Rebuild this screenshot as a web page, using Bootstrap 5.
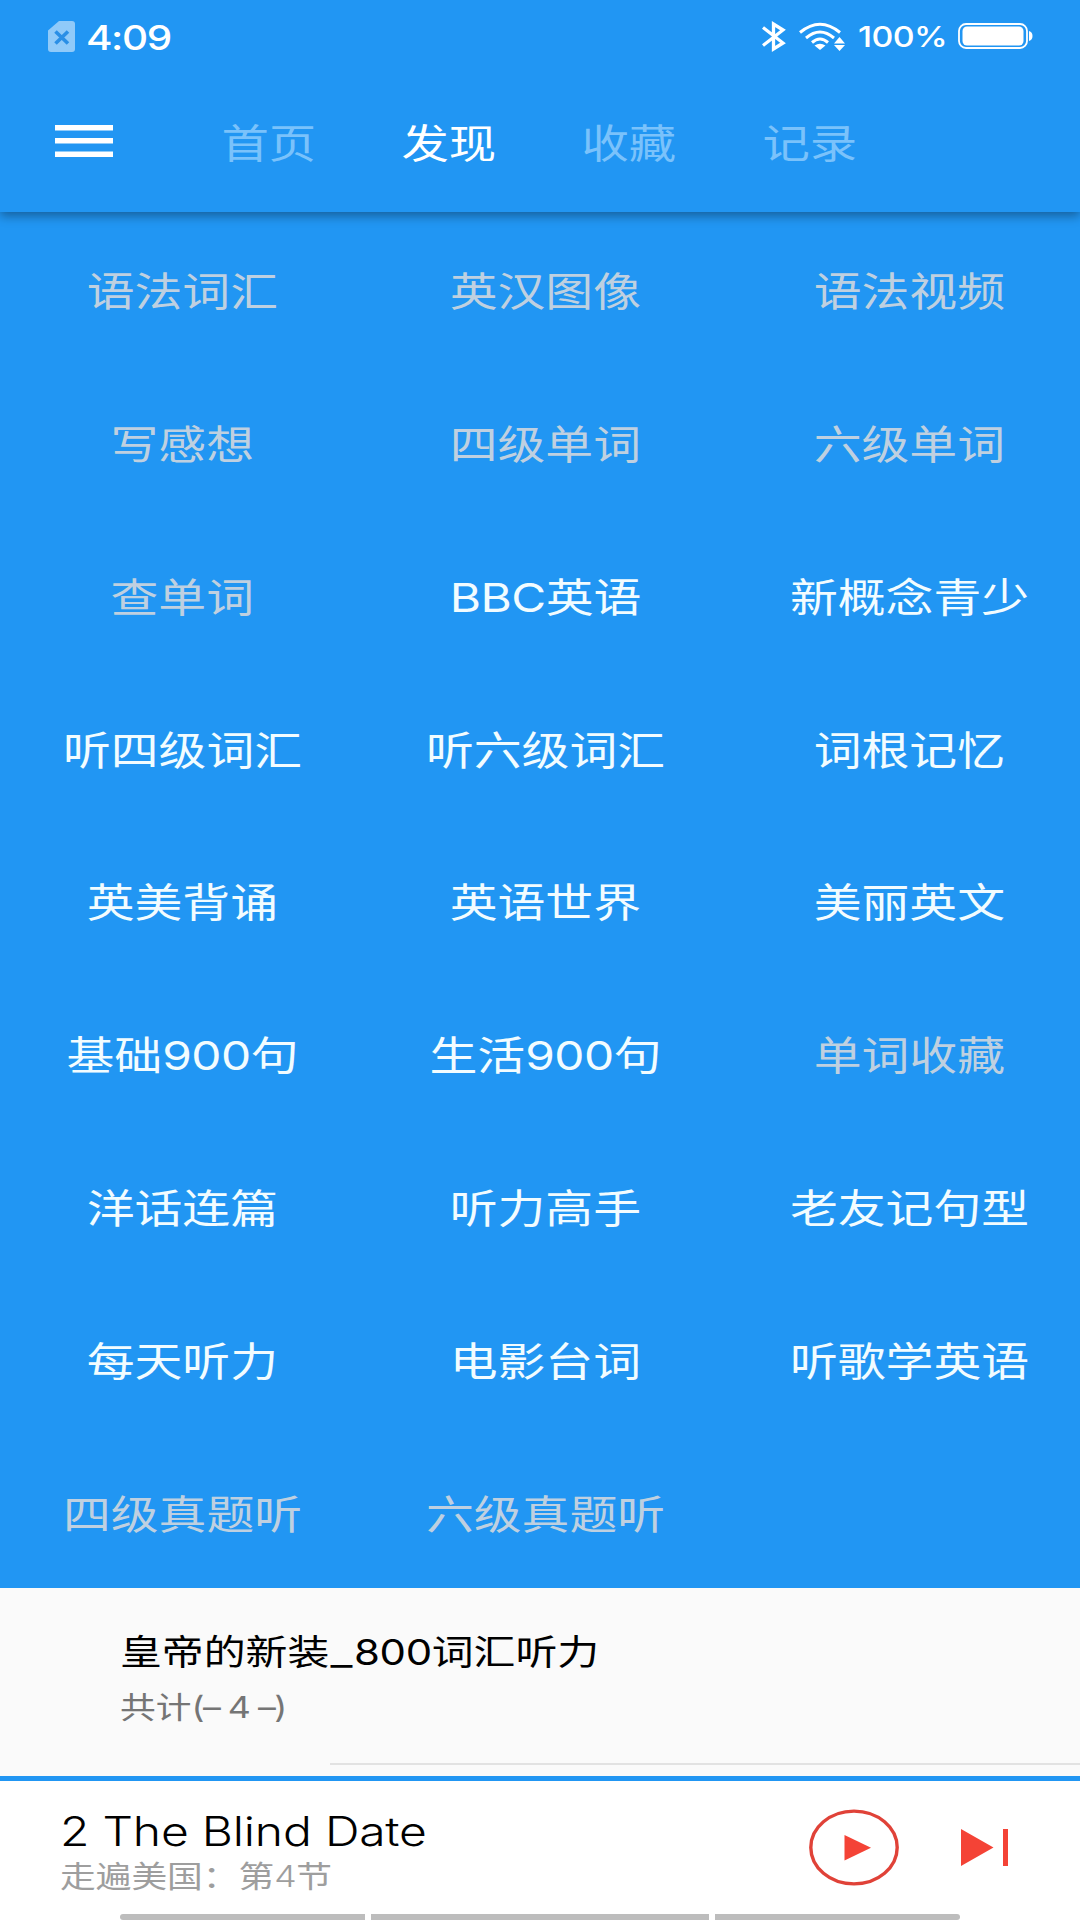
<!DOCTYPE html>
<html lang="zh-CN">
<head>
<meta charset="utf-8">
<meta name="viewport" content="width=device-width, initial-scale=1">
<title>发现</title>
<link href="https://cdn.jsdelivr.net/npm/bootstrap@5.3.0/dist/css/bootstrap.min.css" rel="stylesheet">
<style>
body{font-family:Inter,"Noto Sans CJK SC",sans-serif;background:#fff;color:#111;overflow:hidden}
.screen{width:1080px;height:1920px;overflow:hidden}
.blue{background:#2196f3}
/* wide glyph proportions */
.wide{display:inline-block;transform:scaleX(1.19);white-space:nowrap;line-height:1}
.wide-start{transform-origin:left center}
.status{height:72px;padding:0 47px 0 48px}
.clock{font-size:34px;font-weight:500;width:90px;margin-left:11px;padding-top:2px;letter-spacing:-1.2px}
.pct{font-size:28.5px;font-weight:500;width:88px;margin-left:13px;letter-spacing:-.5px;padding-top:2px}
.wifi{margin-left:13px}
.battery{margin-left:12px}
.appbar{height:212px;box-shadow:0 4px 10px rgba(0,0,0,.36);z-index:2}
.tabs-row{height:140px;padding-left:55px}
.tabs-row .nav{margin-left:65.500px}
.tabs-row .nav-link{width:180.3px;font-size:39.8px;color:#7ac2fb;padding:3px 0 0}
.tabs-row .nav-link.active{color:#fff}
.topics{display:grid;grid-template-columns:repeat(3,342px);column-gap:21.3px;grid-auto-rows:152.8px;height:1376px;padding:4px 0 0 11.500px;font-size:40.2px;color:#f2fcff}
.topics .dim{color:#bfd0e0}
.num{font-weight:300;letter-spacing:-.3px}
.topics .num{font-weight:400;letter-spacing:-.4px}
.book{height:188px;background:#fafafa;padding-left:120px}
.book-title{font-size:35.2px;margin-top:47px;color:#000}
.book-title .num{font-weight:400;letter-spacing:-.3px}
.book-title .underscore{display:inline-block;transform:scaleX(1.15);margin:0 2.500px}
.book-sub{font-size:30px;color:#757575;margin-top:22px}
.book-sub .num{font-weight:400;letter-spacing:-1.25px}
.rule{height:2px;background:#e2e2e2;margin:41px 0 0 210px}
.player{height:138px;border-top:5px solid #2196f3;padding-left:60px}
.track{font-size:40.3px;font-weight:300;width:749px;margin-top:31px;letter-spacing:-.15px;color:#000}
.track-sub{font-size:30px;color:#9e9e9e;margin-top:9px}
.play{margin-top:28px}
.next{margin:48px 0 0 62px}
.pager{gap:6px;padding-left:120px;height:6px}
.pager span{background:#bdbdbd;height:6px;width:245px}
.pager .pager-mid{width:338px}
</style>
</head>
<body>
<div class="screen d-flex flex-column">
  <header class="appbar blue position-relative flex-shrink-0">
    <div class="status d-flex align-items-center text-white">
      <svg width="27" height="31" viewBox="0 0 27 31"><path d="M11 0H24Q27 0 27 3V28Q27 31 24 31H3Q0 31 0 28V9.500Z" fill="#90caf9"/><path d="M7.500 10.500L20 22.500M20 10.500L7.500 22.500" stroke="#2a8fe6" stroke-width="3.600"/></svg>
      <div class="clock"><span class="wide wide-start">4:09</span></div>
      <svg class="ms-auto" width="24" height="31" viewBox="0 0 24 31" fill="none" stroke="#fff" stroke-width="3.300"><path d="M1 6.500L21 22L11.500 28V3L21 9L1 24.500"/></svg>
      <svg class="wifi" width="46" height="29" viewBox="0 0 46 29" fill="none" stroke="#fff" stroke-width="3"><path d="M1 10.500Q21 -6 41 10.500M7 16Q21 4 35 16M13 20.500Q21 13.500 29 20.500"/><path d="M15.500 23.500Q21 20 26.500 23.500L21 28Z" fill="#fff" stroke="none"/><path d="M35 21.500L40.500 15L46 21.500ZM35 23H46L40.500 29Z" fill="#fff" stroke="none"/></svg>
      <div class="pct"><span class="wide wide-start">100%</span></div>
      <svg class="battery" width="75" height="26" viewBox="0 0 75 26"><rect x="1" y="1" width="68" height="24" rx="7" fill="none" stroke="#fff" stroke-width="1.800"/><rect x="4.500" y="3.500" width="61" height="19" rx="4.500" fill="#fff"/><path d="M71 8Q74.500 9 74.500 13T71 18Z" fill="#fff"/></svg>
    </div>
    <nav class="tabs-row d-flex align-items-center">
      <svg width="58" height="34" viewBox="0 0 58 34" fill="#fff"><path d="M0 0H58V5.500H0ZM0 13H58V18.500H0ZM0 26.500H58V32H0Z"/></svg>
      <div class="nav flex-nowrap text-center">
        <a class="nav-link"><span class="wide">首页</span></a>
        <a class="nav-link active"><span class="wide">发现</span></a>
        <a class="nav-link"><span class="wide">收藏</span></a>
        <a class="nav-link"><span class="wide">记录</span></a>
      </div>
    </nav>
  </header>
  <main class="topics blue flex-shrink-0 text-center align-items-center">
    <div class="dim"><span class="wide">语法词汇</span></div><div class="dim"><span class="wide">英汉图像</span></div><div class="dim"><span class="wide">语法视频</span></div>
    <div class="dim"><span class="wide">写感想</span></div><div class="dim"><span class="wide">四级单词</span></div><div class="dim"><span class="wide">六级单词</span></div>
    <div class="dim"><span class="wide">查单词</span></div><div><span class="wide"><span class="num">BBC</span>英语</span></div><div><span class="wide">新概念青少</span></div>
    <div><span class="wide">听四级词汇</span></div><div><span class="wide">听六级词汇</span></div><div><span class="wide">词根记忆</span></div>
    <div><span class="wide">英美背诵</span></div><div><span class="wide">英语世界</span></div><div><span class="wide">美丽英文</span></div>
    <div><span class="wide">基础<span class="num">900</span>句</span></div><div><span class="wide">生活<span class="num">900</span>句</span></div><div class="dim"><span class="wide">单词收藏</span></div>
    <div><span class="wide">洋话连篇</span></div><div><span class="wide">听力高手</span></div><div><span class="wide">老友记句型</span></div>
    <div><span class="wide">每天听力</span></div><div><span class="wide">电影台词</span></div><div><span class="wide">听歌学英语</span></div>
    <div class="dim"><span class="wide">四级真题听</span></div><div class="dim"><span class="wide">六级真题听</span></div>
  </main>
  <section class="book d-flex flex-column flex-shrink-0">
    <div class="book-title lh-1"><span class="wide wide-start">皇帝的新装<span class="num"><span class="underscore">_</span>800</span>词汇听力</span></div>
    <div class="book-sub lh-1"><span class="wide wide-start">共计<span class="num">(– 4 –)</span></span></div>
    <div class="rule"></div>
  </section>
  <footer class="player bg-white d-flex flex-shrink-0">
    <div>
      <div class="track lh-1"><span class="wide wide-start">2 The Blind Date</span></div>
      <div class="track-sub lh-1"><span class="wide wide-start">走遍美国：第<span class="num">4</span>节</span></div>
    </div>
    <svg class="play" width="90" height="77" viewBox="0 0 90 77"><ellipse cx="45" cy="38.500" rx="43.200" ry="36.400" fill="none" stroke="#e04238" stroke-width="3.400"/><path d="M35.500 26L62 38.800L35.500 51.500Z" fill="#f44336"/></svg>
    <svg class="next" width="47" height="37" viewBox="0 0 47 37" fill="#f44336"><path d="M0 0L32.500 18.500L0 37ZM42 0H47V37H42Z"/></svg>
  </footer>
  <div class="pager d-flex flex-shrink-0">
    <span class="rounded-start"></span><span class="pager-mid"></span><span class="rounded-end"></span>
  </div>
</div>
<script src="https://cdn.jsdelivr.net/npm/bootstrap@5.3.0/dist/js/bootstrap.bundle.min.js"></script>
</body>
</html>
